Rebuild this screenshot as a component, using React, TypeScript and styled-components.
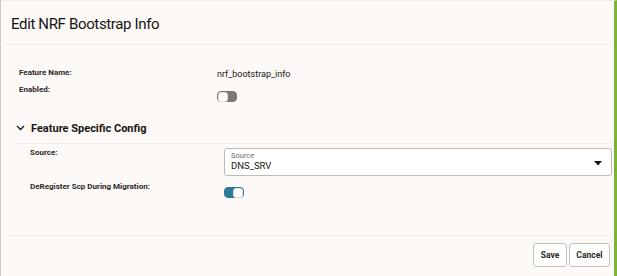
import React from "react";
import styled, { createGlobalStyle } from "styled-components";

const Global = createGlobalStyle`
  html, body { margin: 0; padding: 0; background: #fcf9f7; }
  body { font-family: Roboto, "Liberation Sans", Arial, sans-serif; color: #161513; }
`;

const Page = styled.div`
  box-sizing: border-box;
  width: 617px;
  height: 276px;
  background: #fcf9f7;
  border-left: 1px solid #cfccc8;
  border-top: 1px solid #efece9;
  border-right: 3px solid #7ab53a;
  display: flex;
  flex-direction: column;
  overflow: hidden;
`;

const Header = styled.div`
  height: 43px;
  margin: 0 2px 0 5px;
  padding-left: 5px;
  display: flex;
  align-items: center;
  border-bottom: 1px solid #eeebe8;
`;

const Title = styled.h1`
  margin: 2px 0 0;
  font-size: 15px;
  font-weight: 400;
  letter-spacing: -0.35px;
  color: #161513;
`;

const Body = styled.div`
  padding: 23px 0 0 18px;
  display: flex;
  flex-direction: column;
`;

const Row = styled.div<{ $labelW: number; $h: number }>`
  display: grid;
  grid-template-columns: ${(p) => p.$labelW}px 1fr;
  height: ${(p) => p.$h}px;
  align-items: start;
`;

const Label = styled.div`
  font-size: 8px;
  font-weight: 700;
  color: #2c2a28;
  line-height: 10px;
`;

const Value = styled.div`
  font-size: 9px;
  color: #161513;
  line-height: 12px;
`;

const Toggle = styled.div<{ $on?: boolean; $mt: number }>`
  box-sizing: border-box;
  margin-top: ${(p) => p.$mt}px;
  width: 20px;
  height: 11px;
  border-radius: 4px;
  background: ${(p) => (p.$on ? "#2f7898" : "#7a7775")};
  border: 1px solid ${(p) => (p.$on ? "#2f7898" : "#7a7775")};
  position: relative;
  &::after {
    content: "";
    position: absolute;
    top: 0;
    ${(p) => (p.$on ? "right: 0;" : "left: 0;")}
    width: 8px;
    height: 8px;
    border-radius: 3px;
    background: #ffffff;
    border: 0.5px solid #e2e0dd;
  }
`;

const SectionHead = styled.div`
  margin-top: 15px;
  margin-left: -3px;
  display: flex;
  align-items: center;
  gap: 6px;
  height: 16px;
  margin-right: 2px;
`;

const SectionTitle = styled.div`
  font-size: 11px;
  font-weight: 700;
  color: #161513;
`;

const SectionRule = styled.div`
  margin: 7px 2px 0 -3px;
  border-top: 1px solid #eeebe8;
`;

const SectionBody = styled.div`
  padding: 4px 2px 0 11px;
  display: flex;
  flex-direction: column;
`;

const Select = styled.div`
  box-sizing: border-box;
  height: 28px;
  background: #ffffff;
  border: 1px solid #bfbcb8;
  border-radius: 3px;
  padding: 3px 9px 0 6px;
  display: flex;
  align-items: center;
  justify-content: space-between;
`;

const SelectText = styled.div`
  display: flex;
  flex-direction: column;
`;

const SelectLabel = styled.span`
  font-size: 7.5px;
  color: #6f6c69;
  line-height: 8px;
  margin-top: -3px;
`;

const SelectValue = styled.span`
  font-size: 9.5px;
  color: #161513;
  line-height: 12px;
`;

const Footer = styled.div`
  margin: auto 2px 0 7px;
  border-top: 1px solid #eeebe8;
  padding: 7px 2px 9px 0;
  display: flex;
  justify-content: flex-end;
  gap: 2px;
`;

const Button = styled.button`
  box-sizing: border-box;
  height: 24px;
  padding: 0 6.5px;
  background: #fefefd;
  border: 1px solid #c4c1bd;
  border-radius: 3px;
  font-family: Roboto, "Liberation Sans", Arial, sans-serif;
  font-size: 8.5px;
  font-weight: 700;
  color: #2c2a28;
`;

const Chevron = () => (
  <svg width="9" height="6" viewBox="0 0 9 6">
    <path d="M1 1 L4.5 4.5 L8 1" fill="none" stroke="#161513" strokeWidth="1.3" />
  </svg>
);

const Caret = () => (
  <svg width="8" height="5" viewBox="0 0 8 5">
    <path d="M0 0 L8 0 L4 4.5 Z" fill="#161513" />
  </svg>
);

export default function App() {
  return (
    <>
      <Global />
      <Page>
        <Header>
          <Title>Edit NRF Bootstrap Info</Title>
        </Header>
        <Body>
          <Row $labelW={198} $h={17}>
            <Label>Feature Name:</Label>
            <Value>nrf_bootstrap_info</Value>
          </Row>
          <Row $labelW={198} $h={20}>
            <Label>Enabled:</Label>
            <Toggle $mt={6} />
          </Row>
          <SectionHead>
            <Chevron />
            <SectionTitle>Feature Specific Config</SectionTitle>
          </SectionHead>
          <SectionRule />
          <SectionBody>
            <Row $labelW={194} $h={34}>
              <Label>Source:</Label>
              <Select>
                <SelectText>
                  <SelectLabel>Source</SelectLabel>
                  <SelectValue>DNS_SRV</SelectValue>
                </SelectText>
                <Caret />
              </Select>
            </Row>
            <Row $labelW={194} $h={20}>
              <Label>DeRegister Scp During Migration:</Label>
              <Toggle $on $mt={5} />
            </Row>
          </SectionBody>
        </Body>
        <Footer>
          <Button>Save</Button>
          <Button>Cancel</Button>
        </Footer>
      </Page>
    </>
  );
}
